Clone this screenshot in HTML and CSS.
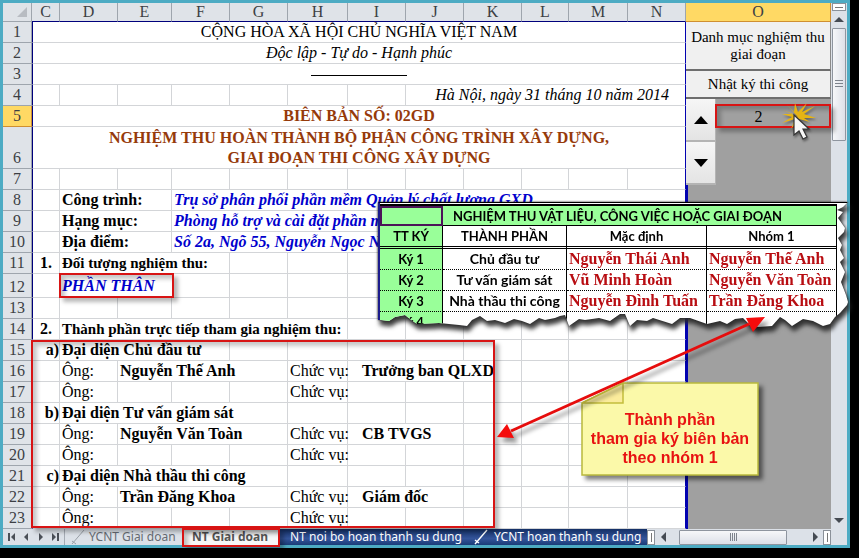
FILE: index.html
```html
<!DOCTYPE html>
<html lang="vi">
<head>
<meta charset="utf-8">
<title>Biên bản nghiệm thu</title>
<link rel="stylesheet" href="styles.css">
</head>
<body>
<main class="window">
  <div class="workspace">
    <table class="sheet">
      <colgroup>
        <col class="w-row"><col class="w-c"><col class="w-m"><col class="w-e"><col class="w-m"><col class="w-m"><col class="w-h"><col class="w-m"><col class="w-m"><col class="w-m"><col class="w-l"><col class="w-n"><col class="w-m"><col>
      </colgroup>
      <thead>
        <tr>
          <th class="corner"><svg width="10" height="10" viewBox="0 0 10 10"><path d="M10 0V10H0Z" fill="#b8bcc2"/></svg></th>
          <th>C</th><th>D</th><th>E</th><th>F</th><th>G</th><th>H</th><th>I</th><th>J</th><th>K</th><th>L</th><th>M</th><th>N</th><th class="current">O</th>
        </tr>
      </thead>
      <tbody>
        <tr><th>1</th><td class="center" colspan="12">CỘNG HÒA XÃ HỘI CHỦ NGHĨA VIỆT NAM</td>
          <td class="side" rowspan="23">
            <div class="panel">
              <button class="push push-tall">Danh mục nghiệm thu giai đoạn</button>
              <button class="push">Nhật ký thi công</button>
              <div class="group">
                <div class="spin">
                  <button aria-label="Tăng"><svg width="14" height="8" viewBox="0 0 14 8"><path d="M7 0L14 8H0Z"/></svg></button>
                  <button aria-label="Giảm"><svg width="14" height="8" viewBox="0 0 14 8"><path d="M0 0H14L7 8Z"/></svg></button>
                </div>
                <output class="number">2</output>
              </div>
            </div>
          </td></tr>
        <tr><th>2</th><td class="center italic" colspan="12">Độc lập - Tự do - Hạnh phúc</td></tr>
        <tr><th>3</th><td class="center" colspan="12"><span class="rule"></span></td></tr>
        <tr><th>4</th><td></td><td></td><td></td><td></td><td></td><td></td><td></td><td class="right italic" colspan="5">Hà Nội, ngày 31 tháng 10 năm 2014</td></tr>
        <tr><th class="current">5</th><td class="center title" colspan="12">BIÊN BẢN SỐ: 02GD</td></tr>
        <tr class="double"><th>6</th><td class="center title" colspan="12">NGHIỆM THU HOÀN THÀNH BỘ PHẬN CÔNG TRÌNH XÂY DỰNG,<br>GIAI ĐOẠN THI CÔNG XÂY DỰNG</td></tr>
        <tr><th>7</th><td></td><td></td><td></td><td></td><td></td><td></td><td></td><td></td><td></td><td></td><td></td><td></td></tr>
        <tr><th>8</th><td></td><td class="bold" colspan="2">Công trình:</td><td class="entry" colspan="9">Trụ sở phân phối phần mềm Quản lý chất lượng GXD</td></tr>
        <tr><th>9</th><td></td><td class="bold" colspan="2">Hạng mục:</td><td class="entry" colspan="9">Phòng hỗ trợ và cài đặt phần mềm</td></tr>
        <tr><th>10</th><td></td><td class="bold" colspan="2">Địa điểm:</td><td class="entry" colspan="9">Số 2a, Ngõ 55, Nguyễn Ngọc Nại</td></tr>
        <tr><th>11</th><td class="bold center">1.</td><td class="bold heading" colspan="3">Đối tượng nghiệm thu:</td><td></td><td></td><td></td><td></td><td></td><td></td><td></td><td></td></tr>
        <tr class="tall"><th>12</th><td></td><td class="entry" colspan="3">PHẦN THÂN</td><td></td><td></td><td></td><td></td><td></td><td></td><td></td><td></td></tr>
        <tr><th>13</th><td></td><td></td><td></td><td></td><td></td><td></td><td></td><td></td><td></td><td></td><td></td><td></td></tr>
        <tr><th>14</th><td class="bold center">2.</td><td class="bold heading" colspan="5">Thành phần trực tiếp tham gia nghiệm thu:</td><td></td><td></td><td></td><td></td><td></td><td></td></tr>
        <tr><th>15</th><td class="bold mark">a)</td><td class="bold" colspan="3">Đại diện Chủ đầu tư</td><td></td><td></td><td></td><td></td><td></td><td></td><td></td><td></td></tr>
        <tr><th>16</th><td></td><td>Ông:</td><td class="bold" colspan="3">Nguyễn Thế Anh</td><td>Chức vụ:</td><td class="bold role" colspan="3">Trưởng ban QLXD</td><td></td><td></td><td></td></tr>
        <tr><th>17</th><td></td><td>Ông:</td><td></td><td></td><td></td><td>Chức vụ:</td><td></td><td></td><td></td><td></td><td></td><td></td></tr>
        <tr><th>18</th><td class="bold mark">b)</td><td class="bold" colspan="4">Đại diện Tư vấn giám sát</td><td></td><td></td><td></td><td></td><td></td><td></td><td></td></tr>
        <tr><th>19</th><td></td><td>Ông:</td><td class="bold" colspan="3">Nguyễn Văn Toàn</td><td>Chức vụ:</td><td class="bold role" colspan="2">CB TVGS</td><td></td><td></td><td></td><td></td></tr>
        <tr><th>20</th><td></td><td>Ông:</td><td></td><td></td><td></td><td>Chức vụ:</td><td></td><td></td><td></td><td></td><td></td><td></td></tr>
        <tr><th>21</th><td class="bold mark">c)</td><td class="bold" colspan="4">Đại diện Nhà thầu thi công</td><td></td><td></td><td></td><td></td><td></td><td></td><td></td></tr>
        <tr><th>22</th><td></td><td>Ông:</td><td class="bold" colspan="3">Trần Đăng Khoa</td><td>Chức vụ:</td><td class="bold role" colspan="2">Giám đốc</td><td></td><td></td><td></td><td></td></tr>
        <tr><th>23</th><td></td><td>Ông:</td><td></td><td></td><td></td><td>Chức vụ:</td><td></td><td></td><td></td><td></td><td></td><td></td></tr>
      </tbody>
    </table>
    <div class="vscroll">
      <span class="split-h"></span>
      <button class="arrow" aria-label="Lên"><svg width="10" height="5" viewBox="0 0 10 5"><path d="M5 0L10 5H0Z"/></svg></button>
      <span class="thumb-v"></span>
      <button class="arrow arrow-end" aria-label="Xuống"><svg width="10" height="5" viewBox="0 0 10 5"><path d="M0 0H10L5 5Z"/></svg></button>
    </div>
  </div>

  <div class="tabbar">
    <div class="nav">
      <button aria-label="Trang đầu"><svg width="8" height="8" viewBox="0 0 8 8"><path d="M0 0H2V8H0ZM7 0V8L3 4Z"/></svg></button>
      <button aria-label="Trang trước"><svg width="8" height="8" viewBox="0 0 8 8"><path d="M6 0V8L2 4Z"/></svg></button>
      <button aria-label="Trang sau"><svg width="8" height="8" viewBox="0 0 8 8"><path d="M2 0V8L6 4Z"/></svg></button>
      <button aria-label="Trang cuối"><svg width="8" height="8" viewBox="0 0 8 8"><path d="M6 0H8V8H6ZM1 0V8L5 4Z"/></svg></button>
    </div>
    <div class="tabs">
      <button class="tab tab-light"><svg class="slant" width="14" height="16" viewBox="0 0 14 16"><path d="M1 15L13 1M1 12L5 15" fill="none" stroke="#9aa0a8"/></svg>YCNT Giai doan</button>
      <button class="tab tab-active">NT Giai doan</button>
      <button class="tab tab-dark">NT noi bo hoan thanh su dung</button>
      <button class="tab tab-dark tab-last"><svg class="slant" width="14" height="16" viewBox="0 0 14 16"><path d="M1 15L13 1M1 11L5 14" fill="none" stroke="#fff" stroke-width="1.4"/></svg>YCNT hoan thanh su dung</button>
    </div>
    <div class="hscroll">
      <span class="split-v"></span>
      <button class="harrow" aria-label="Trái"><svg width="5" height="10" viewBox="0 0 5 10"><path d="M5 0V10L0 5Z"/></svg></button>
      <span class="thumb-h"></span>
      <button class="harrow harrow-end" aria-label="Phải"><svg width="5" height="10" viewBox="0 0 5 10"><path d="M0 0V10L5 5Z"/></svg></button>
      <span class="split-v"></span>
    </div>
  </div>

  <div class="frame frame-part"></div>
  <div class="frame frame-members"></div>
  <div class="frame frame-tab"></div>
  <div class="frame frame-number"></div>

  <div class="torn">
    <div class="paper">
      <table class="signers">
        <colgroup><col class="s-no"><col class="s-role"><col class="s-name"><col class="s-group"></colgroup>
        <tbody>
          <tr class="s-title"><th class="picked"></th><th class="wide" colspan="3">NGHIỆM THU VẬT LIỆU, CÔNG VIỆC HOẶC GIAI ĐOẠN</th></tr>
          <tr class="s-head"><th>TT KÝ</th><th>THÀNH PHẦN</th><th>Mặc định</th><th>Nhóm 1</th></tr>
          <tr><th>Ký 1</th><td>Chủ đầu tư</td><td class="person">Nguyễn Thái Anh</td><td class="person">Nguyễn Thế Anh</td></tr>
          <tr><th>Ký 2</th><td>Tư vấn giám sát</td><td class="person">Vũ Minh Hoàn</td><td class="person">Nguyễn Văn Toàn</td></tr>
          <tr><th>Ký 3</th><td>Nhà thầu thi công</td><td class="person">Nguyễn Đình Tuấn</td><td class="person">Trần Đăng Khoa</td></tr>
          <tr><th>Ký 4</th><td></td><td></td><td></td></tr>
        </tbody>
      </table>
    </div>
  </div>

  <div class="note">
    <svg class="note-shape" width="178" height="94" viewBox="0 0 178 94">
      <path d="M42 1H177V93H1V21Z" fill="#fbf9a9" stroke="#b9b93c" stroke-width="1.5"/>
      <path d="M42 1V21H1Z" fill="#fbec9c" stroke="#c4bd3c" stroke-width="1.5"/>
    </svg>
    <p>Thành phần<br>tham gia ký biên bản<br>theo nhóm 1</p>
  </div>

  <svg class="link-arrow" width="270" height="126" viewBox="0 0 270 126">
    <path d="M14 114L252 7" stroke="#e60d0d" stroke-width="3"/>
    <path d="M0 120L10 107L17 121ZM268 0L249 1L256 15Z" fill="#f50c0c"/>
  </svg>

  <svg class="pointer" width="34" height="38" viewBox="0 0 34 38">
    <path d="M16 14L5 2L12 9L13 0L16 9L25 0L20 9L33 3L22 11L34 15L22 15L28 19L17 16L9 26L13 16L0 20L10 14L0 11L11 11L1 7Z" fill="#e6b414"/>
    <path d="M12 12V32L17 28L21 36L25 34L21 26H27Z" fill="#f7f7f7" stroke="#333" stroke-width="1.2"/>
  </svg>
</main>
</body>
</html>
```
FILE: styles.css
```css
* { box-sizing: border-box; }

body {
  margin: 0;
  background: #000;
  font-family: "Liberation Serif", "Times New Roman", serif;
  font-size: 16px;
  color: #000;
}

button {
  margin: 0;
  padding: 0;
  border: 0;
  background: none;
  font: inherit;
  color: inherit;
}

svg { display: block; }

.window {
  position: relative;
  margin: 0 9px 11px 0;
  padding: 3px;
  background: #4dabc3;
}

.workspace {
  display: flex;
  background: #dfe3e8;
}

/* Sheet grid */
.sheet {
  flex: 1;
  table-layout: fixed;
  width: 100%;
  border-collapse: separate;
  border-spacing: 0;
}

.w-row { width: 29px; }
.w-c { width: 28px; }
.w-m { width: 58px; }
.w-e { width: 54px; }
.w-h { width: 60px; }
.w-l { width: 47px; }
.w-n { width: 59px; }

.sheet tr { height: 21px; }
.sheet thead tr { height: 19px; }
.sheet .double { height: 42px; }
.sheet .tall { height: 24px; }

.sheet th,
.sheet td {
  padding: 0 0 0 2px;
  border: 0 solid #d3d5d8;
  border-width: 0 1px 1px 0;
  line-height: 20px;
  white-space: nowrap;
}

.sheet th {
  padding: 0;
  background: #dfe3e8;
  border-color: #9ea5ad;
  color: #3c3f44;
  font-weight: normal;
  text-align: center;
  vertical-align: bottom;
}

.sheet thead th {
  line-height: 18px;
  border-bottom-color: #00007c;
}

.sheet thead .corner { border-bottom-color: #9ea5ad; }
.corner svg { margin: 0 4px 4px auto; }

.sheet th.current {
  background: #ffd964;
  border-color: #cf8f31;
}

.sheet td {
  background: #fff;
  text-align: left;
}

.sheet td:nth-child(2) { border-left: 1px solid #00007c; }
.sheet td:last-child:not(.side),
.sheet td:nth-last-child(2):has(+ .side) { border-right: 1px solid #0202b0; }

.sheet .center { text-align: center; padding: 0; }
.sheet .right { text-align: right; padding-right: 16px; }
.sheet .mark { text-align: right; padding: 0; }
.sheet .role { padding-left: 14px; }
.bold { font-weight: bold; }
.heading { font-size: 15px; }
.italic { font-style: italic; }
.title { font-weight: bold; color: #963a0a; }
.entry { font-weight: bold; font-style: italic; color: #0000cd; }

.rule {
  display: inline-block;
  width: 96px;
  border-top: 1px solid #000;
  vertical-align: middle;
}

/* Controls beside the form */
.sheet .side {
  padding: 0;
  border: 0;
  background: linear-gradient(#0202b0, #0202b0) left / 2px 100% no-repeat #a0a0a0;
  vertical-align: top;
  white-space: normal;
}

.panel { display: flex; flex-direction: column; }

.push {
  height: 28px;
  background: #f0f0f0;
  border-bottom: 2px solid #6e6e6e;
  border-right: 1px solid #8a8a8a;
  font-size: 15px;
  line-height: 17px;
}

.push-tall { height: 49px; padding: 0 3px; }
.group { display: flex; }

.spin {
  display: flex;
  flex-direction: column;
  width: 30px;
}

.spin button {
  display: grid;
  place-items: center;
  height: 43px;
  background: linear-gradient(#f6f6f6, #e4e4e4);
  border-bottom: 2px solid #b4b4b4;
  border-right: 1px solid #b4b4b4;
}

.number {
  flex: 1;
  padding: 8px 30px 0 0;
  text-align: center;
}

/* Scroll bars */
.vscroll {
  display: flex;
  flex-direction: column;
  align-items: center;
  width: 16px;
  background: #dce1e8;
}

.split-h {
  width: 14px;
  height: 8px;
  background: linear-gradient(#777, #777) center / 8px 1px no-repeat #fff;
  border: 1px solid #8b9199;
}

.arrow {
  display: grid;
  place-items: center;
  width: 16px;
  height: 17px;
  fill: #444a52;
}

.arrow-end { margin-top: auto; }

.thumb-v {
  width: 14px;
  height: 113px;
  border: 1px solid #8e959f;
  border-radius: 1px;
  background: repeating-linear-gradient(#7d838c 0 1px, transparent 1px 3px) center / 8px 9px no-repeat, linear-gradient(90deg, #f6f7f9, #dce0e8);
}

.tabbar {
  display: flex;
  height: 16px;
  padding-right: 16px;
  background: #dce1e8;
  font: 12px "Noto Sans", "Open Sans", sans-serif;
}

.nav {
  display: flex;
  justify-content: space-between;
  align-items: center;
  width: 62px;
  padding: 0 5px;
  border-right: 1px solid #a5abb4;
  fill: #4b5058;
}

.tabs {
  display: flex;
  flex: 1;
  overflow: hidden;
}

.tab {
  flex: none;
  height: 16px;
  line-height: 16px;
  white-space: nowrap;
  text-align: center;
}

.slant { flex: none; }
.tab-light { display: flex; gap: 4px; width: 117px; padding-left: 6px; color: #666b72; }
.tab-active { width: 96px; background: #f7f7f7; color: #555; font-weight: bold; }

.tab-dark {
  width: 196px;
  background: linear-gradient(#143066, #34549a 60%, #1a3c78);
  color: #fff;
}

.tab-last { display: flex; flex: 1; gap: 6px; }

.hscroll {
  display: flex;
  align-items: center;
  width: 184px;
}

.split-v {
  width: 8px;
  height: 15px;
  border: 1px solid #8b9199;
  background: linear-gradient(#777, #777) center / 1px 9px no-repeat #fff;
}

.harrow {
  display: grid;
  place-items: center;
  width: 16px;
  height: 16px;
  fill: #444a52;
}

.harrow-end { margin-left: auto; }

.thumb-h {
  width: 108px;
  height: 15px;
  margin-left: 8px;
  border: 1px solid #8e959f;
  border-radius: 1px;
  background: repeating-linear-gradient(90deg, #7d838c 0 1px, transparent 1px 2px) center / 7px 8px no-repeat, linear-gradient(#f6f7f9, #dce0e8);
}

/* Red call-out frames */
.frame {
  position: absolute;
  border: 2px solid #d81414;
  box-shadow: 4px 4px 4px rgba(0, 0, 0, .28), inset 4px 4px 4px rgba(0, 0, 0, .22);
  pointer-events: none;
}

.frame-part { left: 59px; top: 273px; width: 115px; height: 25px; }
.frame-members { left: 31px; top: 340px; width: 464px; height: 188px; }
.frame-tab { left: 182px; top: 528px; width: 98px; height: 19px; }
.frame-number { left: 715px; top: 104px; width: 116px; height: 24px; }

/* Torn extract of the signer list */
.torn {
  position: absolute;
  left: 378px;
  top: 202px;
  filter: drop-shadow(0 0 1px #222) drop-shadow(2px 5px 2px rgba(40, 40, 40, .9));
}

.paper {
  width: 470px;
  height: 126px;
  overflow: hidden;
  background: #fff;
  border-top: 1px solid #000;
  border-left: 2px solid #1c1c8c;
  clip-path: polygon(0 0, 470px 0, 465px 5px, 459px 8px, 465px 10px, 460px 16px, 467px 26px, 466px 30px, 460px 36px, 464px 43px, 462px 48px, 466px 56px, 462px 60px, 467px 70px, 463px 80px, 468px 93px, 470px 100px, 469px 103px, 462px 111px, 457px 115px, 452px 122px, 445px 124px, 435px 119px, 425px 117px, 414px 124px, 407px 118px, 402px 115px, 394px 124px, 380px 125px, 372px 123px, 365px 116px, 357px 117px, 349px 122px, 342px 119px, 329px 122px, 312px 116px, 302px 116px, 294px 122px, 275px 116px, 269px 119px, 259px 118px, 252px 124px, 247px 112px, 242px 112px, 232px 119px, 221px 116px, 207px 118px, 201px 117px, 191px 124px, 187px 113px, 182px 114px, 177px 116px, 167px 118px, 161px 116px, 152px 122px, 144px 119px, 136px 117px, 127px 121px, 117px 118px, 109px 119px, 102px 114px, 94px 118px, 89px 124px, 81px 123px, 61px 121px, 39px 122px, 32px 117px, 27px 113px, 17px 115px, 11px 119px, 3px 118px, 0 118px);
}

.signers {
  width: 457px;
  margin-top: 1px;
  table-layout: fixed;
  border-collapse: separate;
  border-spacing: 0;
  border-top: 2px solid #000;
  font: bold 14px Lato, "Noto Sans", sans-serif;
}

.s-no { width: 63px; }
.s-role { width: 124px; }
.s-name { width: 140px; }
.signers tr { height: 21px; }
.signers .s-title { height: 20px; }
.signers .s-head { height: 23px; }

.signers th,
.signers td {
  padding: 0;
  border-right: 1px solid #000;
  border-bottom: 1px dotted #000;
  line-height: 18px;
  text-align: center;
  white-space: nowrap;
}

.signers th { font-size: 13px; }
.signers th:first-child,
.signers .wide { background: #9f9; }
.signers .wide { padding-left: 10px; text-align: left; }
.signers .s-title th { border-bottom: 1px solid #000; }
.signers .s-title .picked { border: 2px solid #4c1358; }
.signers .s-head th { border-bottom: 3px double #000; }

.signers .person {
  padding-left: 2px;
  color: #b80d12;
  font-family: "Liberation Serif", "Times New Roman", serif;
  font-size: 16px;
  text-align: left;
}

/* Sticky note, arrow and pointer */
.note {
  position: absolute;
  left: 581px;
  top: 382px;
  width: 178px;
  height: 94px;
  filter: drop-shadow(4px 4px 2px rgba(0, 0, 0, .5));
}

.note-shape { position: absolute; inset: 0; }

.note p {
  position: relative;
  margin: 0;
  padding-top: 28px;
  color: #e81212;
  font: bold 16px/19px "Liberation Sans", Arial, sans-serif;
  text-align: center;
  white-space: nowrap;
}

.link-arrow {
  position: absolute;
  left: 497px;
  top: 317px;
  filter: drop-shadow(4px 5px 2px rgba(0, 0, 0, .4));
  overflow: visible;
}

.pointer {
  position: absolute;
  left: 782px;
  top: 103px;
  filter: drop-shadow(1px 2px 1px rgba(0, 0, 0, .4));
}
```
